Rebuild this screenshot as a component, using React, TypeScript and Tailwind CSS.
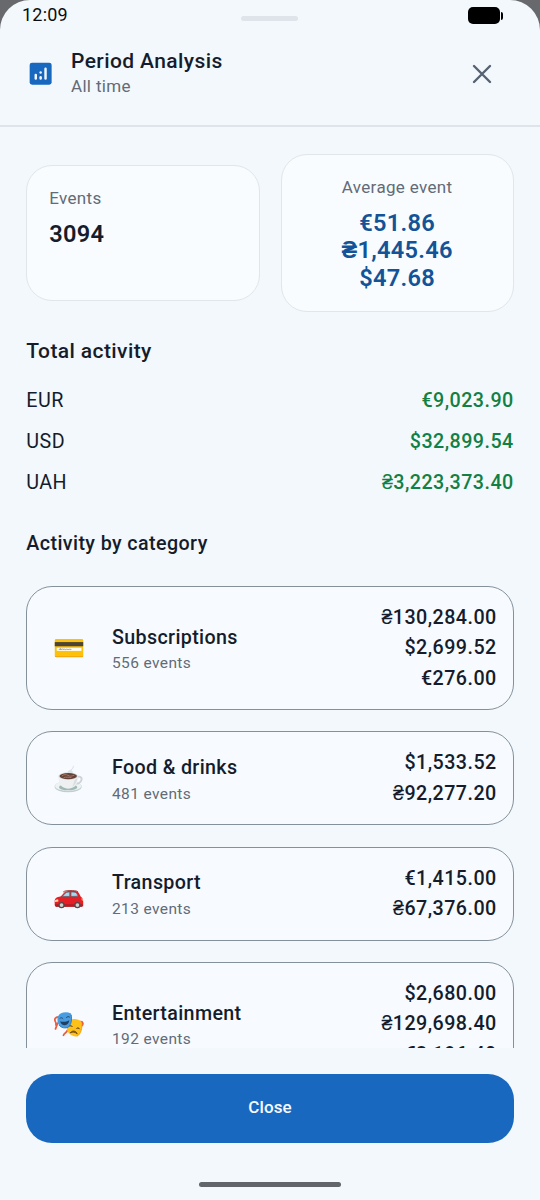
import type { ReactNode } from "react";

function CardEmoji() {
  return (
    <svg width="30" height="28" viewBox="0 0 31 28">
      <rect x="0.8" y="4.8" width="29.4" height="18.6" rx="1.4" fill="#fcc108" />
      <path d="M0.8 22.2h29.4a1.4 1.4 0 0 1-1.4 1.3H2.2a1.4 1.4 0 0 1-1.4-1.3z" fill="#f5a80b" />
      <rect x="0.8" y="7.9" width="29.4" height="4.3" fill="#4b4437" />
      <rect x="2.8" y="13.8" width="25.6" height="3.2" fill="#fffdf3" />
      <path d="M5 16.1l1.5-1.7.5 1.7 1.4-1.4.7.9 1.4-.5 1.2.6 1.5-.5 1.5.4 1.5-.3 1.7.2" fill="none" stroke="#6b6455" strokeWidth="0.6" />
    </svg>
  );
}

function CoffeeEmoji() {
  return (
    <svg className="mt-[1px]" width="30" height="29" viewBox="0 0 31 30">
      <path d="M15 9c-3-3 2-3.500 3.500-5.500S19 1 20.500 .5c.5 2-1 3.500-2 4.500s2.500 1.500 0 4z" fill="#dde3e8" />
      <ellipse cx="14.600" cy="22.500" rx="14" ry="5.800" fill="#c3cdd0" />
      <ellipse cx="14.600" cy="21.800" rx="13.500" ry="5.100" fill="#edf2f2" />
      <ellipse cx="14.600" cy="23" rx="9.500" ry="3.200" fill="#a1b9b6" />
      <path d="M23 13c3-2 6-.7 5.500 2.200-.5 3-3.700 4.300-6.500 4" fill="none" stroke="#cdd4d7" strokeWidth="2" />
      <path d="M4.500 11.500c0 7 2.500 13 10.200 13s10.200-6 10.200-13z" fill="#eef0f1" />
      <path d="M19 22.500c3-2 4.700-5.500 5.300-9l-3 2z" fill="#d9dddf" />
      <ellipse cx="14.700" cy="11.500" rx="10.200" ry="4" fill="#dce0e2" />
      <ellipse cx="14.700" cy="11.500" rx="9" ry="3.200" fill="#644238" />
      <path d="M8 11.500c2-2 5-1.800 6.500-.8s3 1.300 6.500-.2M10 13c2-.8 5-.3 8 0" fill="none" stroke="#a77b66" strokeWidth="1" />
    </svg>
  );
}

function CarEmoji() {
  return (
    <svg className="mt-[10px]" width="30" height="28" viewBox="0 0 31 28">
      <path d="M.7 16.500c0-3 1.500-4.300 6.500-5.300l3.500-4c1-1 2.200-1.400 4-1.500 4.500-.3 7.800-.1 9.700.8 1.200.7 2.600 3.500 3.300 5.300 1.700 1 2.500 2.600 2.500 5.200v3.400c0 1-.7 1.500-1.800 1.500H2.500C1.200 21.900.7 21 .7 19.700z" fill="#e41f25" />
      <path d="M8.500 11.300l3.300-3.500c.7-.7 1.800-.9 4.500-1v4.600zM17.500 6.800c2.500 0 4.300.1 5.300.7.9.6 1.700 2.500 2.100 3.600l-7.400.3z" fill="#a5d9ed" stroke="#59606a" strokeWidth=".8" />
      <path d="M9.500 6.800c1.700-1.300 4-1.500 7-1.500s6.700 0 8.200 1.100" fill="none" stroke="#9b3d3c" strokeWidth="1" />
      <path d="M1.200 15l3-.8.4 2.300-3.600.6z" fill="#ffd9a0" />
      <path d="M28.400 12.700c1 .8 1.500 1.800 1.600 3l-1.300-.3z" fill="#ffb477" />
      <path d="M1 19.500h28.800v1.200c0 .8-.5 1.200-1.400 1.200H2.500c-1 0-1.500-1-1.500-2.400z" fill="#ad1f25" />
      <circle cx="7.800" cy="20.300" r="3.300" fill="#494d50" />
      <circle cx="7.800" cy="20.300" r="1.900" fill="#d3cfc9" />
      <circle cx="24.200" cy="20.300" r="3.300" fill="#494d50" />
      <circle cx="24.200" cy="20.300" r="1.900" fill="#d3cfc9" />
    </svg>
  );
}

function MasksEmoji() {
  return (
    <svg width="30" height="27" viewBox="0 0 31 28">
      <path d="M4.500 6c-3 .3-4.500 2.300-3.200 4.800 1.500 2-.2 3.300 1.200 4.700M3.800 12.500l-2.300 6M17.300 16.500c-2 2.500-2.800 2.200-4 4.500s-2.500 1.300-3.500 4.200M27.500 11c3-.2 2.800 2.800 1.500 4.200" fill="none" stroke="#eb5b3c" strokeWidth="1.800" strokeLinecap="round" />
      <path d="M15.500 9.500c4.500-2.200 10-1.500 12.800 1.600 1.300 5.500.4 12.300-4.300 15.100-4.700.8-9.800-2.600-10.800-7.500z" fill="#fdc119" />
      <path d="M23.500 26.200c4.500-2.200 6-8.500 5-14.500" fill="none" stroke="#f09b1a" strokeWidth=".9" />
      <path d="M15.500 15.700c1.200-1 2.600-.8 3.500.5M23.300 18c1-1 2.500-.7 3.200.6M17 22.500c2.200-3 6-2 7 1.300-2-2-4.500-2.500-7-1.300z" fill="#78501a" stroke="#78501a" strokeWidth="1" strokeLinecap="round" />
      <path d="M4 5.600C6.200 1.600 12 .2 17.600 2.500c1.400 4.500 1.200 10.800-3.200 14.600-4.200 1.500-8.700-.3-10.300-4.300-.7-2-.8-5-.1-7.200z" fill="#4a9ce0" />
      <path d="M5 14.500c2.500 3 6 3.700 9.400 2.500 3.800-3 4.200-8.500 3.300-13" fill="none" stroke="#2876b8" strokeWidth=".9" />
      <path d="M6.200 7.500c1-.8 2-.7 3 .4M12.800 6.700c1-1.100 2.400-1.200 3.300-.4" fill="none" stroke="#24476b" strokeWidth="1" strokeLinecap="round" />
      <path d="M6.300 10.500c2.800 1.300 6.200.9 9.500-.9-.4 3-2 5-4.600 5.100-2.500 0-4.300-1.500-4.900-4.200z" fill="#203f61" />
    </svg>
  );
}

interface Category {
  icon: ReactNode;
  name: string;
  events: number;
  amounts: string[];
}

const totals = [
  ["EUR", "€9,023.90"],
  ["USD", "$32,899.54"],
  ["UAH", "₴3,223,373.40"],
];

const categories: Category[] = [
  { icon: <CardEmoji />, name: "Subscriptions", events: 556, amounts: ["₴130,284.00", "$2,699.52", "€276.00"] },
  { icon: <CoffeeEmoji />, name: "Food & drinks", events: 481, amounts: ["$1,533.52", "₴92,277.20"] },
  { icon: <CarEmoji />, name: "Transport", events: 213, amounts: ["€1,415.00", "₴67,376.00"] },
  { icon: <MasksEmoji />, name: "Entertainment", events: 192, amounts: ["$2,680.00", "₴129,698.40", "€3,196.40"] },
];

function CategoryCard({ icon, name, events, amounts }: Category) {
  return (
    <div className="flex shrink-0 items-center rounded-[26px] border border-[#84919b] bg-[#f7fbff] pt-[16px] pb-[15px] pr-[16px] pl-[26.500px]">
      <div className="flex w-[31px] shrink-0 justify-center">{icon}</div>
      <div className="ml-[27.200px] flex-1 pt-[2px]">
        <div className="text-[19.700px] leading-[27.500px] font-medium tracking-[0.35px] text-[#151d2d]">{name}</div>
        <div className="text-[15.500px] leading-[24px] tracking-[0.38px] text-[#626b76]">{events} events</div>
      </div>
      <div className="flex flex-col items-end text-[19.700px] leading-[30.400px] font-medium tracking-[0.45px] text-[#151d2d]">
        {amounts.map((amount) => (
          <div key={amount}>{amount}</div>
        ))}
      </div>
    </div>
  );
}

export default function App() {
  return (
    <div className="h-[1200px] w-[540px] overflow-hidden bg-[#68696c] font-['Roboto',sans-serif]">
      <div className="flex h-full flex-col rounded-t-[30px] bg-[#f3f8fc]">
        <header className="h-[127px] shrink-0 border-b-2 border-[#dee4e9]">
          <div className="grid h-[32px] grid-cols-3 items-start px-[22px]">
            <span className="pt-[4px] text-[18px] leading-[21px] tracking-[0.2px] text-[#0b0d10]">12:09</span>
            <div className="mt-[16px] h-[5px] w-[57px] justify-self-center rounded-full bg-[#dfe3ea]" />
            <div className="mt-[7px] mr-[15px] flex items-center justify-self-end">
              <div className="h-[17px] w-[32px] rounded-[5px] bg-black" />
              <div className="ml-[1px] h-[8px] w-[2px] rounded-r bg-black" />
            </div>
          </div>
          <div className="flex h-[83px] items-center pr-[42px] pl-[26px]">
            <svg width="29.300" height="29.300" viewBox="0 0 24 24">
              <rect x="3" y="3" width="18" height="18" rx="2" fill="#1968c0" />
              <rect x="7" y="12" width="2" height="5" rx="1" fill="#f3f7fb" />
              <circle cx="12" cy="11" r="1" fill="#f3f7fb" />
              <rect x="11" y="14" width="2" height="3" rx="1" fill="#f3f7fb" />
              <rect x="15" y="7" width="2" height="10" rx="1" fill="#f3f7fb" />
            </svg>
            <div className="ml-[15.700px] flex-1 pb-[2px]">
              <h1 className="text-[21px] leading-[27px] font-medium tracking-[0.4px] text-[#151d2d]">Period Analysis</h1>
              <p className="text-[17px] leading-[23px] tracking-[0.33px] text-[#626b76]">All time</p>
            </div>
            <svg width="32" height="32" viewBox="0 0 32 32" fill="none" stroke="#566272" strokeWidth="2.400" strokeLinecap="round">
              <path d="M8 8l16 16M24 8L8 24" />
            </svg>
          </div>
        </header>

        <main className="flex h-[921px] shrink-0 flex-col overflow-hidden px-[26.300px]">
          <section className="mt-[26.500px] grid shrink-0 grid-cols-2 items-center gap-[21px]">
            <div className="h-[136px] rounded-[26px] border border-[#e0e6ea] bg-[#f8fcff] px-[22px] pt-[20px]">
              <div className="text-[17px] leading-[25px] tracking-[0.33px] text-[#626b76]">Events</div>
              <div className="mt-[8px] text-[23.600px] leading-[30px] font-semibold tracking-[0.25px] text-[#151d2d]">3094</div>
            </div>
            <div className="h-[158.500px] rounded-[26px] border border-[#e0e6ea] bg-[#f8fcff] pt-[20px] text-center">
              <div className="text-[17px] leading-[25px] tracking-[0.33px] text-[#626b76]">Average event</div>
              <div className="mt-[10px] text-[23.600px] leading-[27.600px] font-semibold tracking-[0.25px] text-[#135397]">
                <div>€51.86</div>
                <div>₴1,445.46</div>
                <div>$47.68</div>
              </div>
            </div>
          </section>

          <h2 className="mt-[24px] shrink-0 text-[21px] leading-[30px] font-medium tracking-[0.4px] text-[#151d2d]">Total activity</h2>
          <div className="mt-[14.800px] shrink-0">
            {totals.map(([currency, amount]) => (
              <div key={currency} className="flex h-[40.700px] items-center justify-between text-[19.700px] tracking-[0.45px]">
                <span className="text-[#151d2d]">{currency}</span>
                <span className="font-medium text-[#128044]">{amount}</span>
              </div>
            ))}
          </div>

          <h2 className="mt-[26.200px] shrink-0 text-[19.700px] leading-[30px] font-medium tracking-[0.4px] text-[#151d2d]">Activity by category</h2>
          <div className="mt-[26.700px] flex flex-col gap-[21.500px]">
            {categories.map((category) => (
              <CategoryCard key={category.name} {...category} />
            ))}
          </div>
        </main>

        <footer className="flex flex-col px-[26.300px] pt-[26px]">
          <button className="h-[68.500px] rounded-[26px] bg-[#1968c0] pb-[1px] text-[17px] font-medium tracking-[0.13px] text-[#f5faff]">Close</button>
          <div className="mt-[39.500px] h-[5px] w-[142px] self-center rounded-full bg-[#626569]" />
        </footer>
      </div>
    </div>
  );
}
